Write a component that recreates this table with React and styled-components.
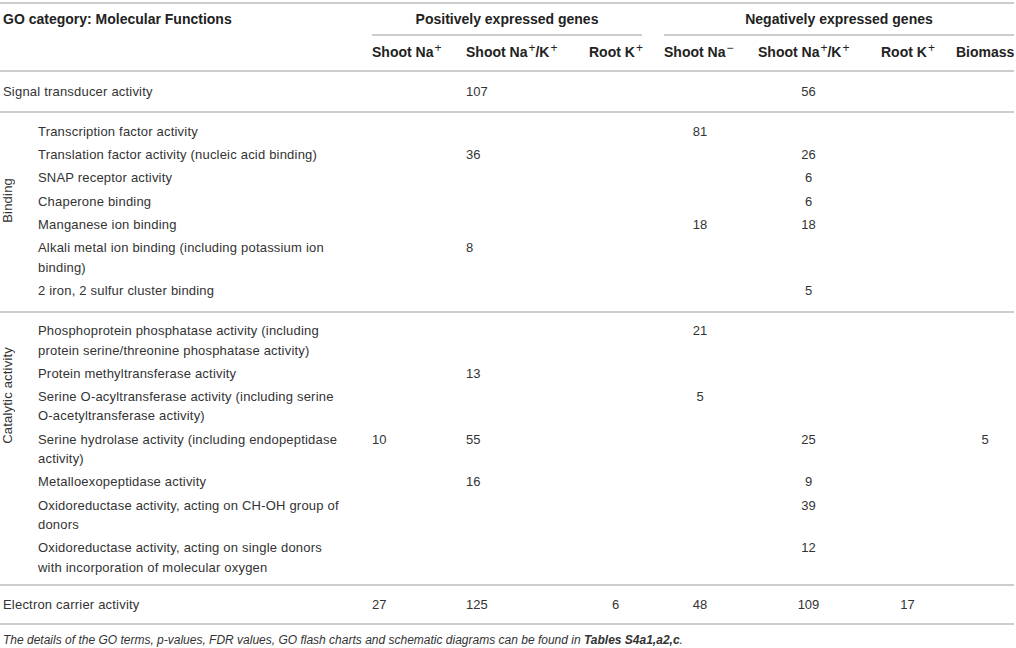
import styled, { createGlobalStyle } from "styled-components";

const GlobalStyle = createGlobalStyle`
  html, body {
    margin: 0;
    padding: 0;
    background: #ffffff;
  }
  body {
    font-family: "Liberation Sans", Arial, sans-serif;
    color: #333333;
  }
`;

const COLUMNS = "16px 312px 72px 101px 53px 72px 101px 53px 58px";
const RULE = "2px solid #cdcdcd";

const Page = styled.div`
  width: 1016px;
  padding-top: 2px;
`;

const Table = styled.div`
  width: 1014px;
  display: flex;
  flex-direction: column;
`;

const Section = styled.div`
  display: grid;
  grid-template-columns: ${COLUMNS};
  column-gap: 22px;
  padding: ${(p) => p.$pad || "0"};
  border-bottom: ${RULE};
  ${(p) => p.$top && `border-top: ${RULE};`}
`;

const Row = styled.div`
  display: contents;
`;

const HeadCell = styled.div`
  grid-column: ${(p) => p.$span || "auto"};
  padding: ${(p) => p.$pad || "0"};
  font-size: 14px;
  font-weight: bold;
  line-height: 19.3px;
  color: #222222;
  white-space: nowrap;
  text-align: ${(p) => p.$align || "left"};
  ${(p) => p.$rule && `border-bottom: ${RULE};`}
`;

const Sup = styled.sup`
  font-size: 12px;
  font-weight: normal;
  line-height: 0;
  vertical-align: 5px;
  margin-left: 1px;
`;

const Label = styled.div`
  grid-column: ${(p) => (p.$wide ? "1 / 3" : "2")};
  padding: 2px 5px 2px ${(p) => (p.$wide ? "3px" : "0")};
  font-size: 13px;
  letter-spacing: 0.2px;
  line-height: 19.3px;
`;

const Value = styled.div`
  padding: 2px 0;
  font-size: 13px;
  line-height: 19.3px;
  text-align: ${(p) => p.$align};
`;

const Rail = styled.div`
  grid-column: 1;
  grid-row: 1 / span ${(p) => p.$rows};
  justify-self: center;
  align-self: start;
  margin-top: ${(p) => p.$offset}px;
  writing-mode: vertical-rl;
  transform: rotate(180deg);
  font-size: 13px;
  letter-spacing: 0.2px;
  line-height: 16px;
  white-space: nowrap;
`;

const Note = styled.p`
  margin: 7px 0 0 3px;
  font-size: 12px;
  font-style: italic;
  line-height: 16px;
  color: #333333;

  b {
    font-weight: bold;
  }
`;

const ALIGN = ["left", "left", "center", "center", "center", "center", "center"];

const headers = [
  ["Shoot Na", "+"],
  ["Shoot Na", "+", "/K", "+"],
  ["Root K", "+"],
  ["Shoot Na", "\u2212"],
  ["Shoot Na", "+", "/K", "+"],
  ["Root K", "+"],
  ["Biomass"],
];

const groups = [
  {
    name: "Binding",
    offset: 58,
    pad: "7px 0 9px",
    rows: [
      ["Transcription factor activity", ["", "", "", "81", "", "", ""]],
      ["Translation factor activity (nucleic acid binding)", ["", "36", "", "", "26", "", ""]],
      ["SNAP receptor activity", ["", "", "", "", "6", "", ""]],
      ["Chaperone binding", ["", "", "", "", "6", "", ""]],
      ["Manganese ion binding", ["", "", "", "18", "18", "", ""]],
      ["Alkali metal ion binding (including potassium ion binding)", ["", "8", "", "", "", "", ""]],
      ["2 iron, 2 sulfur cluster binding", ["", "", "", "", "5", "", ""]],
    ],
  },
  {
    name: "Catalytic activity",
    offset: 28,
    pad: "6px 0 5px",
    rows: [
      [
        "Phosphoprotein phosphatase activity (including protein serine/threonine phosphatase activity)",
        ["", "", "", "21", "", "", ""],
      ],
      ["Protein methyltransferase activity", ["", "13", "", "", "", "", ""]],
      [
        "Serine O-acyltransferase activity (including serine O-acetyltransferase activity)",
        ["", "", "", "5", "", "", ""],
      ],
      ["Serine hydrolase activity (including endopeptidase activity)", ["10", "55", "", "", "25", "", "5"]],
      ["Metalloexopeptidase activity", ["", "16", "", "", "9", "", ""]],
      ["Oxidoreductase activity, acting on CH-OH group of donors", ["", "", "", "", "39", "", ""]],
      [
        "Oxidoreductase activity, acting on single donors with incorporation of molecular oxygen",
        ["", "", "", "", "12", "", ""],
      ],
    ],
  },
];

function HeaderText({ parts }) {
  return parts.map((part, i) =>
    i % 2 === 1 ? <Sup key={i}>{part}</Sup> : <span key={i}>{part}</span>
  );
}

function Values({ values }) {
  return values.map((v, i) => (
    <Value key={i} $align={ALIGN[i]}>
      {v}
    </Value>
  ));
}

export default function App() {
  return (
    <Page>
      <GlobalStyle />
      <Table>
        <Section $top>
          <HeadCell $span="1 / 3" $pad="6px 0 5px 3px">
            GO category: Molecular Functions
          </HeadCell>
          <HeadCell $span="3 / 6" $pad="6px 0 5px" $align="center" $rule>
            Positively expressed genes
          </HeadCell>
          <HeadCell $span="6 / 10" $pad="6px 0 5px" $align="center" $rule>
            Negatively expressed genes
          </HeadCell>
          <HeadCell $span="1 / 3" $pad="7px 0" />
          {headers.map((h, i) => (
            <HeadCell key={i} $pad="7px 0">
              <HeaderText parts={h} />
            </HeadCell>
          ))}
        </Section>

        <Section $pad="8px 0">
          <Label $wide>Signal transducer activity</Label>
          <Values values={["", "107", "", "", "56", "", ""]} />
        </Section>

        {groups.map((g) => (
          <Section key={g.name} $pad={g.pad}>
            <Rail $rows={g.rows.length} $offset={g.offset}>
              {g.name}
            </Rail>
            {g.rows.map(([label, values]) => (
              <Row key={label}>
                <Label>{label}</Label>
                <Values values={values} />
              </Row>
            ))}
          </Section>
        ))}

        <Section $pad="7px 0">
          <Label $wide>Electron carrier activity</Label>
          <Values values={["27", "125", "6", "48", "109", "17", ""]} />
        </Section>
      </Table>
      <Note>
        The details of the GO terms, p-values, FDR values, GO flash charts and schematic
        diagrams can be found in <b>Tables S4a1,a2,c</b>.
      </Note>
    </Page>
  );
}
